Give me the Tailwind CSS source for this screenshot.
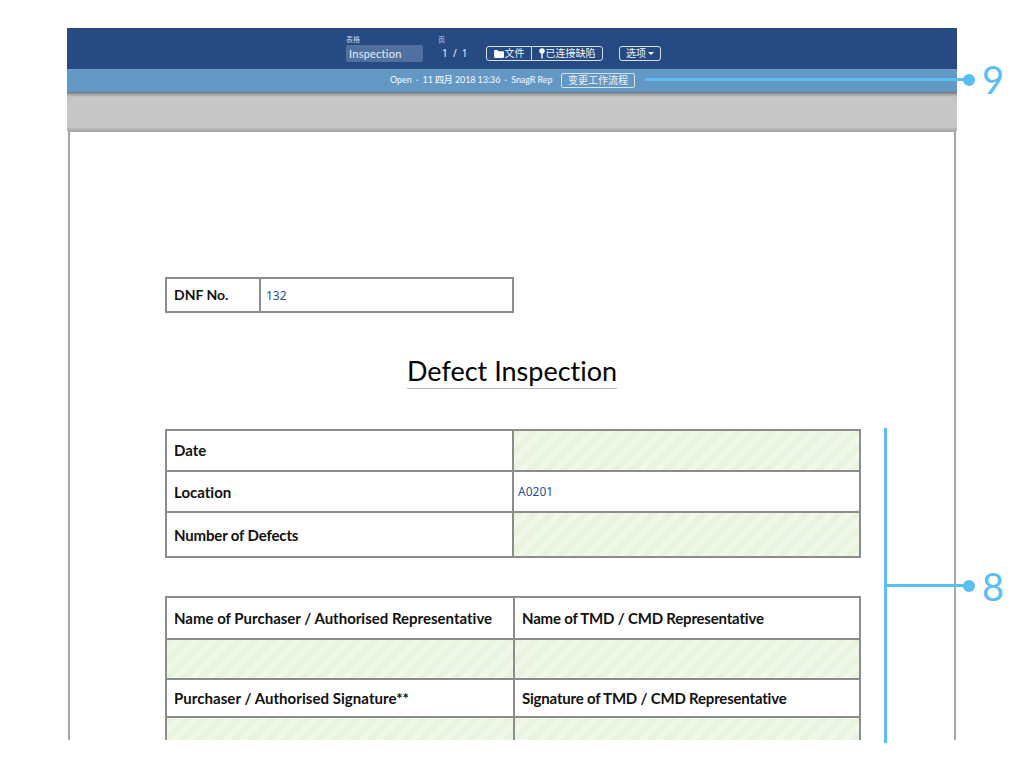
<!DOCTYPE html>
<html lang="zh">
<head>
<meta charset="utf-8">
<script src="https://cdn.jsdelivr.net/npm/@tailwindcss/browser@4"></script>
</head>
<body class="bg-white font-['Lato','Noto_Sans_CJK_SC',sans-serif] [font-variant-ligatures:none]">
<div class="relative w-[1024px] h-[768px] overflow-hidden">
  <div class="ml-[67px] pt-[28px] w-[890px] h-[740px] flex flex-col overflow-hidden">
    <header class="h-[41px] shrink-0 bg-[#264b82] text-white flex items-start pl-[279px] pt-[7px]">
      <div class="w-[92px] flex flex-col">
        <span class="text-[7px] leading-[9px] text-[#c4d0e0] h-[10px]">表格</span>
        <span class="w-[77px] h-[17px] rounded-[2px] bg-[#50719f] text-[11px] leading-[17px] pl-[3px] text-[#e8edf4] tracking-[0.25px]">Inspection</span>
      </div>
      <div class="w-[48px] flex flex-col">
        <span class="text-[7px] leading-[9px] text-[#c4d0e0] h-[10px]">页</span>
        <span class="text-[10px] leading-[17px] pl-[4px] whitespace-pre text-[#e8edf4] font-['Noto_Sans',sans-serif]">1  /  1</span>
      </div>
      <div class="mt-[11px] flex h-[15px] w-[117px] border border-[#d5dde9] rounded-[3px] text-[10px] leading-[13px] text-[#f0f3f8]">
        <span class="w-[45px] flex items-center justify-center gap-[1px] border-r border-[#d5dde9]">
          <svg width="10" height="8" viewBox="0 0 10 8"><path d="M0 1.2C0 .5.5 0 1.2 0h2.2l1 1.2h4.4c.7 0 1.2.5 1.2 1.2v4.4C10 7.500 9.500 8 8.800 8H1.200C.5 8 0 7.500 0 6.800z" fill="#fff"/></svg>
          文件
        </span>
        <span class="flex-1 flex items-center justify-center gap-[1px]">
          <svg width="6" height="11" viewBox="0 0 6 11"><circle cx="3" cy="3" r="2.700" fill="#fff"/><rect x="2.300" y="5" width="1.400" height="5.500" fill="#fff"/></svg>
          已连接缺陷
        </span>
      </div>
      <div class="ml-[16px] mt-[11px] flex items-center justify-center gap-[2px] h-[15px] w-[42px] border border-[#d5dde9] rounded-[3px] text-[10px] leading-[13px] text-[#f0f3f8]">
        选项
        <svg width="6" height="3" viewBox="0 0 6 3"><path d="M0 0h6L3 3z" fill="#fff"/></svg>
      </div>
    </header>
    <div class="h-[24px] shrink-0 bg-[#6398c5] border-t border-[#6f9fc9] border-b border-b-[#6c7d8e] flex items-center pb-[2px] pl-[323px] text-[#eef3f8] text-[9px]">
      <span class="w-[161px] whitespace-pre tracking-[-0.1px] font-medium">Open  ·  11 四月 2018 13:36  ·  SnagR Rep</span>
      <span class="ml-[10px] w-[74px] h-[15px] border border-[#d5e2ee] rounded-[2px] text-[10px] leading-[13px] text-center">变更工作流程</span>
    </div>
    <div class="h-[38px] shrink-0 bg-[linear-gradient(#8c8c8c_0,#c6c6c6_4px,#c6c6c6_34px,#a6a6a6_38px)]"></div>
    <main class="flex-1 mx-[1px] bg-white border-x-2 border-t border-[#a6a6a6] text-[#111]">
      <div class="ml-[95px] mt-[145px] w-[349px] h-[36px] grid grid-cols-[94px_1fr] border-2 border-[#8c8c8c]">
        <div class="border-r-2 border-[#8c8c8c] pl-[7px] font-bold text-[14px] leading-[32px]">DNF No.</div>
        <div class="pl-[5px] pt-[1px] text-[12px] leading-[32px] text-[#2a4f8f] font-['Noto_Sans',sans-serif]">132</div>
      </div>
      <h1 class="mt-[41px] text-center text-[27px] leading-[34px] font-normal text-black"><span class="inline-block border-b border-[#b5b5b5]">Defect Inspection</span></h1>
      <div class="ml-[95px] mt-[40px] w-[696px] grid grid-cols-[347px_1fr] grid-rows-[41px_41px_43px] border-2 border-[#8c8c8c] text-[15px] font-bold">
        <div class="pl-[7px] flex items-center border-r-2 border-b-2 border-[#8c8c8c]">Date</div>
        <div class="border-b-2 border-[#8c8c8c] bg-[repeating-linear-gradient(135deg,#e8f4dd_0,#e8f4dd_6px,#f0f8ea_6px,#f0f8ea_12px)]"></div>
        <div class="pl-[7px] pt-[2px] flex items-center border-r-2 border-b-2 border-[#8c8c8c]">Location</div>
        <div class="pl-[4px] flex items-center border-b-2 border-[#8c8c8c] text-[12px] font-normal text-[#2a4f8f] font-['Noto_Sans',sans-serif]">A0201</div>
        <div class="pl-[7px] pt-[2px] flex items-center border-r-2 border-[#8c8c8c] tracking-[-0.15px]">Number of Defects</div>
        <div class="bg-[repeating-linear-gradient(135deg,#e8f4dd_0,#e8f4dd_6px,#f0f8ea_6px,#f0f8ea_12px)]"></div>
      </div>
      <div class="ml-[95px] mt-[38px] w-[696px] grid grid-cols-[348px_1fr] grid-rows-[42px_40px_38px_40px] border-2 border-b-0 border-[#8c8c8c] text-[15px] font-bold">
        <div class="pl-[7px] flex items-center border-r-2 border-b-2 border-[#8c8c8c]">Name of Purchaser / Authorised Representative</div>
        <div class="pl-[7px] flex items-center border-b-2 border-[#8c8c8c] tracking-[-0.2px]">Name of TMD / CMD Representative</div>
        <div class="border-r-2 border-b-2 border-[#8c8c8c] bg-[repeating-linear-gradient(135deg,#e8f4dd_0,#e8f4dd_6px,#f0f8ea_6px,#f0f8ea_12px)]"></div>
        <div class="border-b-2 border-[#8c8c8c] bg-[repeating-linear-gradient(135deg,#e8f4dd_0,#e8f4dd_6px,#f0f8ea_6px,#f0f8ea_12px)]"></div>
        <div class="pl-[7px] flex items-center border-r-2 border-b-2 border-[#8c8c8c] tracking-[0.05px]">Purchaser / Authorised Signature**</div>
        <div class="pl-[7px] flex items-center border-b-2 border-[#8c8c8c] tracking-[-0.2px]">Signature of TMD / CMD Representative</div>
        <div class="border-r-2 border-[#8c8c8c] bg-[repeating-linear-gradient(135deg,#e8f4dd_0,#e8f4dd_6px,#f0f8ea_6px,#f0f8ea_12px)]"></div>
        <div class="bg-[repeating-linear-gradient(135deg,#e8f4dd_0,#e8f4dd_6px,#f0f8ea_6px,#f0f8ea_12px)]"></div>
      </div>
    </main>
  </div>

  <!-- callouts over the screenshot -->
  <div class="absolute left-[645px] top-[78px] w-[320px] h-[3px] bg-[#5bbdf6]"></div>
  <div class="absolute left-[963px] top-[74px] w-[12px] h-[12px] rounded-full bg-[#5bbdf6]"></div>
  <div class="absolute left-[982px] top-[57px] text-[38px] leading-[44px] font-normal text-[#5bbdf6]">9</div>
  <div class="absolute left-[884px] top-[428px] w-[3px] h-[315px] bg-[#5bbdf6]"></div>
  <div class="absolute left-[884px] top-[584px] w-[81px] h-[3px] bg-[#5bbdf6]"></div>
  <div class="absolute left-[963px] top-[580px] w-[12px] h-[12px] rounded-full bg-[#5bbdf6]"></div>
  <div class="absolute left-[982px] top-[564px] text-[38px] leading-[44px] font-normal text-[#5bbdf6]">8</div>
</div>
</body>
</html>
